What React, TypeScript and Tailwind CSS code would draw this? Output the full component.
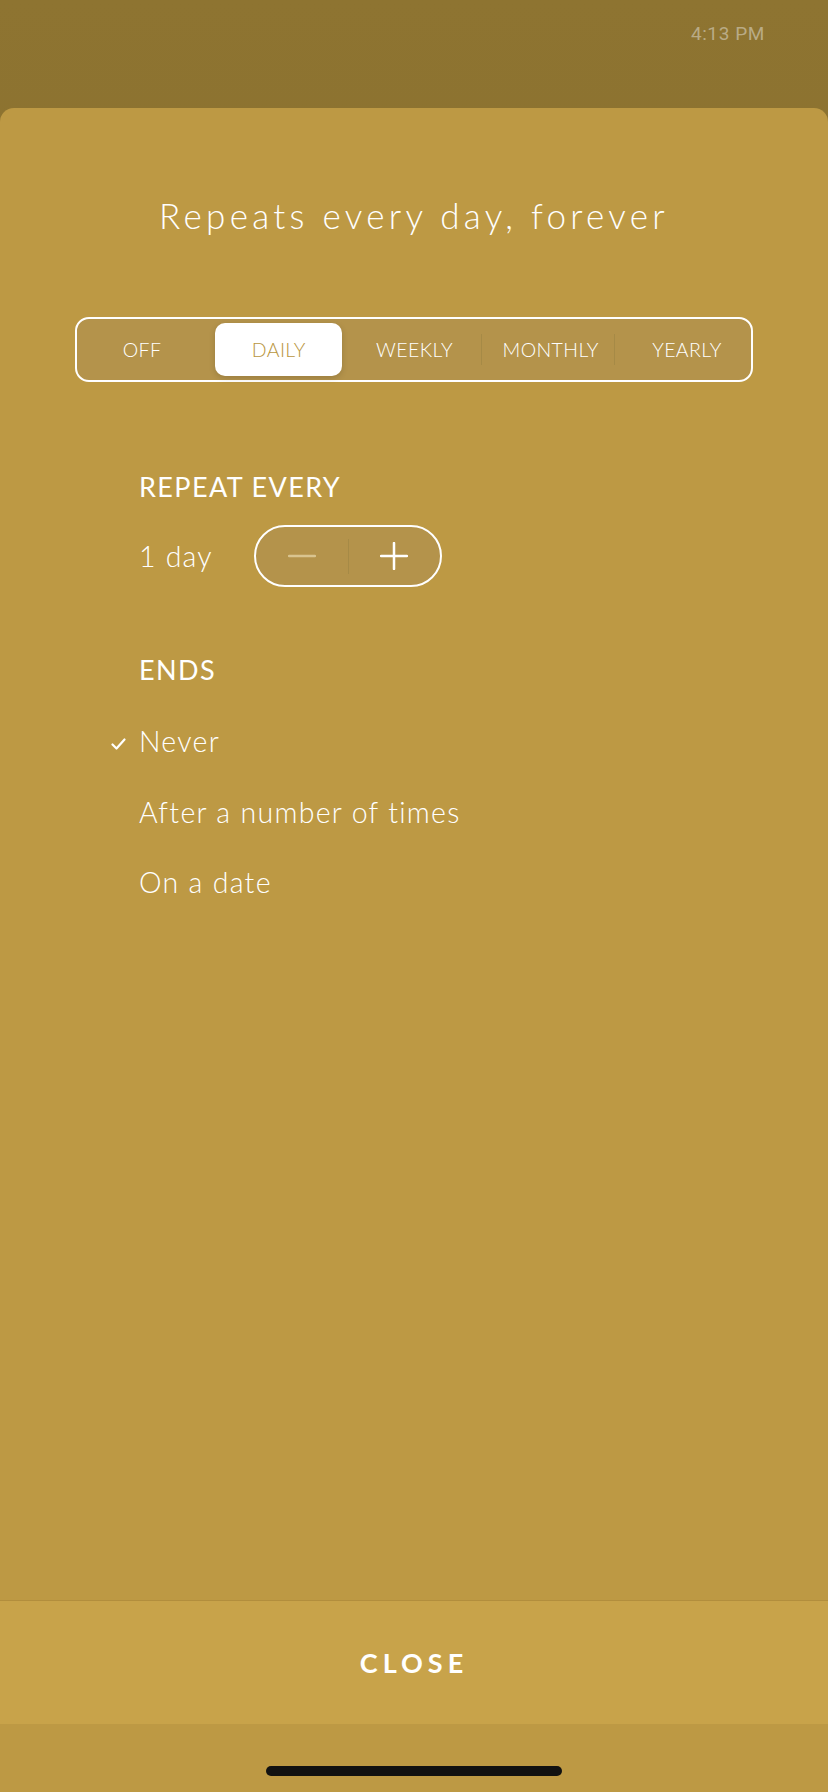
import { useState } from 'react';

const options = ['OFF', 'DAILY', 'WEEKLY', 'MONTHLY', 'YEARLY'];
const endsOptions = ['Never', 'After a number of times', 'On a date'];
// small nudges so the labels sit where the native control puts them
const labelPad = ['pr-[12px]', '', '', 'pl-[6px]', 'pl-[12px]'];

export default function App() {
  const [selected, setSelected] = useState(1);
  const [ends, setEnds] = useState(0);
  const [count, setCount] = useState(1);

  return (
    <div
      className="h-[1792px] w-[828px] flex flex-col bg-gradient-to-b from-[#8e7431] to-[#7c6325]"
      style={{ fontFamily: 'Lato, "Noto Sans", sans-serif' }}
    >
      {/* Status bar */}
      <div className="h-[108px] shrink-0 flex justify-end pr-[63px] pt-[24px]">
        <span
          className="text-[19px] leading-none text-[#b9ab86] tracking-[0.6px]"
          style={{ fontFamily: 'Roboto, "Liberation Sans", sans-serif' }}
        >
          4:13 PM
        </span>
      </div>

      {/* Sheet */}
      <div className="flex-1 flex flex-col bg-[#bd9944] rounded-t-[14px]">
        <h1 className="pt-[90px] text-center text-white text-[35px] leading-none tracking-[4.3px] font-light">
          Repeats every day, forever
        </h1>

        {/* Segmented control */}
        <div className="mt-[84px] mx-[75px] h-[65px] flex items-stretch border-2 border-white rounded-[14px] bg-[#b4934b] p-[4px]">
          {options.map((opt, i) => {
            const active = i === selected;
            const showDivider = i > 0 && i !== selected && i - 1 !== selected;
            return (
              <div key={opt} className="flex-1 flex items-stretch">
                <div className={`w-px my-[11px] ${showDivider ? 'bg-[#a68a46]' : 'bg-transparent'}`} />
                <button
                  onClick={() => setSelected(i)}
                  className={`flex-1 flex items-center justify-center text-[19.5px] font-light tracking-[0.4px] ${
                    active
                      ? 'bg-white text-[#b99640] rounded-[10px] shadow-[0_2px_6px_rgba(0,0,0,0.15)] mr-[5px]'
                      : `text-white ${labelPad[i]}`
                  }`}
                >
                  {opt}
                </button>
              </div>
            );
          })}
        </div>

        {/* Repeat every */}
        <div className="pl-[139px] mt-[91px]">
          <div className="text-white text-[27px] leading-none font-normal tracking-[1.4px]">REPEAT EVERY</div>
          <div className="mt-[25px] flex items-center gap-[42px]">
            <span className="text-white text-[28.5px] leading-none font-light tracking-[1.2px] w-[73px] whitespace-nowrap">
              {count} {count === 1 ? 'day' : 'days'}
            </span>
            <div className="w-[188px] h-[62px] rounded-full border-2 border-white bg-[#b4934b] flex items-center">
              <button
                onClick={() => setCount((c) => Math.max(1, c - 1))}
                className="flex-1 h-full flex items-center justify-center"
              >
                <svg width="28" height="28" viewBox="0 0 28 28">
                  <path d="M1 14h26" stroke="#d9c48f" strokeWidth="2.5" strokeLinecap="round" />
                </svg>
              </button>
              <div className="w-px h-[35px] bg-[#a68a46]" />
              <button
                onClick={() => setCount((c) => c + 1)}
                className="flex-1 h-full flex items-center justify-center"
              >
                <svg width="28" height="28" viewBox="0 0 28 28">
                  <path d="M1 14h26M14 1v26" stroke="#ffffff" strokeWidth="2.5" strokeLinecap="round" />
                </svg>
              </button>
            </div>
          </div>
        </div>

        {/* Ends */}
        <div className="pl-[139px] mt-[69px]">
          <div className="text-white text-[27px] leading-none font-normal tracking-[1.4px]">ENDS</div>
          <div className="mt-[44px] flex flex-col gap-[42px]">
            {endsOptions.map((opt, i) => (
              <button
                key={opt}
                onClick={() => setEnds(i)}
                className="relative text-left text-white text-[28.5px] leading-none font-light tracking-[1.3px]"
              >
                {ends === i && (
                  <svg
                    className="absolute left-[-28px] top-[11px]"
                    width="15"
                    height="12"
                    viewBox="0 0 15 12"
                  >
                    <path d="M1.5 6.5l4 4 8-9" stroke="#ffffff" strokeWidth="2.2" fill="none" strokeLinecap="round" strokeLinejoin="round" />
                  </svg>
                )}
                {opt}
              </button>
            ))}
          </div>
        </div>

        {/* Close */}
        <button className="mt-auto h-[124px] shrink-0 border-t border-[#b28e3d] bg-[#c8a34a] flex items-center justify-center text-white text-[27px] font-bold tracking-[5px] leading-none">
          CLOSE
        </button>
        <div className="h-[68px] shrink-0 flex items-end justify-center pb-[16px]">
          <div className="w-[296px] h-[10px] rounded-full bg-[#111111]" />
        </div>
      </div>
    </div>
  );
}
